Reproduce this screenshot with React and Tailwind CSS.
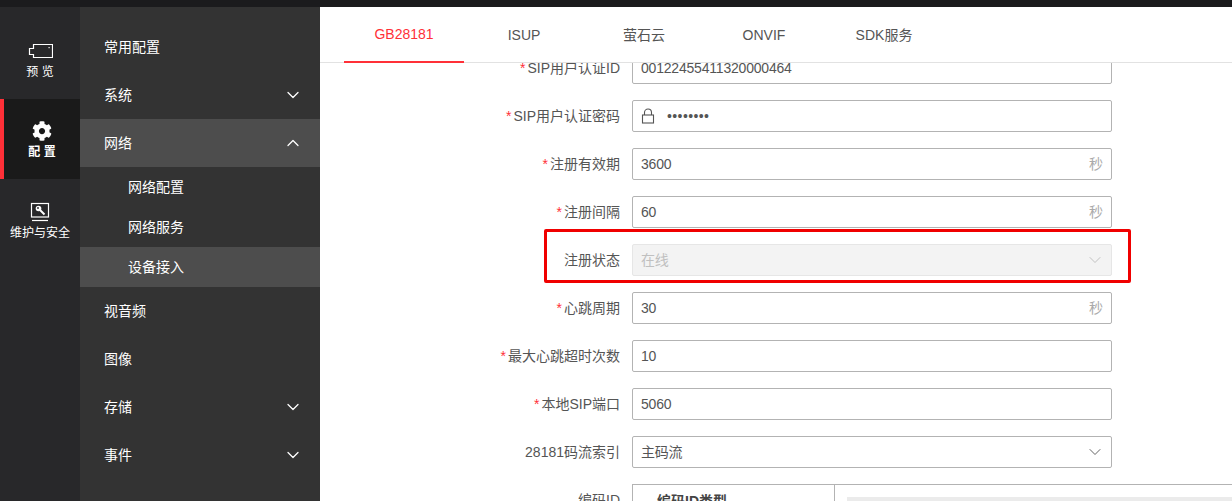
import React from "react";
import { FaCog } from "react-icons/fa";
import { ChevronDown, ChevronUp } from "lucide-react";

const font = "font-['Liberation_Sans','Noto_Sans_CJK_SC',sans-serif]";

const CameraIcon = () => (
  <svg width="26" height="16" viewBox="0 0 26 16" fill="none" stroke="#fff" strokeWidth="1.2">
    <path d="M6.5 1.5H25.5V14.5H6.5V11.5H2.5V5.5H6.5Z" />
    <rect x="21.5" y="4" width="1.2" height="1.2" fill="#fff" stroke="none" />
  </svg>
);

const MaintainIcon = () => (
  <svg width="20" height="20" viewBox="0 0 20 20" fill="none">
    <rect x="1.5" y="1.5" width="17" height="13.5" stroke="#fff" strokeWidth="1.2" />
    <path d="M2 18.5H18" stroke="#fff" strokeWidth="1.2" />
    <circle cx="8.5" cy="6.5" r="2.8" fill="#fff" />
    <circle cx="8" cy="6" r="0.9" fill="#28282a" />
    <path d="M10 8L14.5 12.5" stroke="#fff" strokeWidth="2" />
  </svg>
);

const LockIcon = () => (
  <svg width="14" height="16" viewBox="0 0 14 16" fill="none" stroke="#555" strokeWidth="1.1">
    <rect x="1.5" y="7" width="11" height="8" />
    <path d="M3.5 7V4.5a3.5 3.5 0 0 1 7 0V7" />
  </svg>
);

const railItems = [
  { label: "预 览", icon: <CameraIcon />, cls: "pt-[24px] gap-[4px]" },
  { label: "配 置", icon: <FaCog className="text-[20px] text-white" />, active: true, cls: "pt-[22px] gap-[2px]" },
  { label: "维护与安全", icon: <MaintainIcon />, cls: "pt-[23px] gap-[2px]" },
];

const menu = [
  { label: "常用配置" },
  { label: "系统", arrow: "down" },
  { label: "网络", arrow: "up", open: true },
  { label: "网络配置", sub: true },
  { label: "网络服务", sub: true },
  { label: "设备接入", sub: true, open: true },
  { label: "视音频" },
  { label: "图像" },
  { label: "存储", arrow: "down" },
  { label: "事件", arrow: "down" },
];

const tabs = ["GB28181", "ISUP", "萤石云", "ONVIF", "SDK服务"];

const rows = [
  { label: "SIP用户认证ID", req: true, value: "00122455411320000464" },
  { label: "SIP用户认证密码", req: true, value: "••••••••", lock: true },
  { label: "注册有效期", req: true, value: "3600", unit: "秒" },
  { label: "注册间隔", req: true, value: "60", unit: "秒" },
  { label: "注册状态", value: "在线", select: true, disabled: true },
  { label: "心跳周期", req: true, value: "30", unit: "秒" },
  { label: "最大心跳超时次数", req: true, value: "10" },
  { label: "本地SIP端口", req: true, value: "5060" },
  { label: "28181码流索引", value: "主码流", select: true },
];

const Field = ({ row }) => (
  <div
    className={`w-[480px] h-8 flex items-center pl-2 pr-[2px] rounded-[2px] border ${
      row.disabled ? "bg-[#f3f3f3] border-[#e6e6e6] text-[#c0c0c0]" : "bg-white border-[#b3b3b3] text-[#555]"
    }`}
  >
    {row.lock && (
      <span className="mr-3 flex">
        <LockIcon />
      </span>
    )}
    <span className={`flex-1 ${row.lock ? "tracking-[0.4px]" : "tracking-[-0.2px]"}`}>{row.value}</span>
    {row.unit && <span className="mr-[6px] text-[#aaa]">{row.unit}</span>}
    {row.select && (
      <ChevronDown size={20} strokeWidth={1.1} className={`mr-[4px] ${row.disabled ? "text-[#bbb]" : "text-[#555]"}`} />
    )}
  </div>
);

export default function App() {
  return (
    <div className={`${font} w-full h-[501px] flex flex-col overflow-hidden bg-white text-sm`}>
      <div className="h-[7px] bg-[#1b1b1d]" />
      <div className="flex flex-1 min-h-0">
        <div className="w-20 bg-[#28282a] pt-3 text-white text-xs">
          {railItems.map((item) => (
            <div
              key={item.label}
              className={`h-20 flex flex-col items-center ${item.cls} ${
                item.active ? "bg-[#1a1a1a] border-l-4 border-[#ff3038] font-bold" : ""
              }`}
            >
              {item.icon}
              <span className="leading-[18px] whitespace-pre">{item.label}</span>
            </div>
          ))}
        </div>
        <div className="w-60 bg-[#333333] pt-4 text-white">
          {menu.map((item) => (
            <div
              key={item.label}
              className={`flex items-center justify-between pr-[17px] ${item.sub ? "h-10 pl-12" : "h-12 pl-6"} ${
                item.open ? "bg-[#4d4d4d]" : ""
              }`}
            >
              <span>{item.label}</span>
              {item.arrow === "down" && <ChevronDown size={20} strokeWidth={1.5} />}
              {item.arrow === "up" && <ChevronUp size={20} strokeWidth={1.5} />}
            </div>
          ))}
        </div>
        <div className="relative flex-1 min-w-0 overflow-hidden flex flex-col">
          <div className="h-14 pl-6 flex border-b border-[#e2e2e2]">
            {tabs.map((tab, i) => (
              <div
                key={tab}
                className={`w-[120px] h-14 flex items-center justify-center ${
                  i === 0 ? "text-[#ff3038] border-b-2 border-[#ff3038]" : "text-[#555]"
                }`}
              >
                {tab}
              </div>
            ))}
          </div>
          <div className="relative flex-1 min-h-0 overflow-hidden">
            <div className="mt-[-11px] flex flex-col gap-4">
              {rows.map((row) => (
                <div key={row.label} className="flex items-center">
                  <div className="w-[312px] pr-3 text-right text-[#555]">
                    {row.req && <span className="text-[#ff3038] mr-[2px]">*</span>}
                    {row.label}
                  </div>
                  <Field row={row} />
                </div>
              ))}
              <div className="flex">
                <div className="w-[312px] pr-3 pt-[6px] text-right text-[#555]">编码ID</div>
                <div className="flex-1 flex h-[80px] border-t border-l border-[#b3b3b3]">
                  <div className="w-[202px] pl-6 pt-[6px] border-r border-[#b3b3b3] font-bold text-[#444]">编码ID类型</div>
                  <div className="flex-1 pl-3 pt-3">
                    <div className="h-8 bg-[#ebebeb]" />
                  </div>
                </div>
              </div>
            </div>
            <div className="absolute left-[224px] top-[166px] w-[587px] h-[54px] border-[3px] border-[#f00000] rounded-[2px]" />
          </div>
          <span className="absolute left-[60px] top-[470px] origin-left -rotate-45 pointer-events-none whitespace-pre font-['Liberation_Serif',serif] text-[30px] tracking-[3px] text-black/[0.025]">
            {"1403811   1403811   1403811   1403811"}
          </span>
        </div>
      </div>
    </div>
  );
}
